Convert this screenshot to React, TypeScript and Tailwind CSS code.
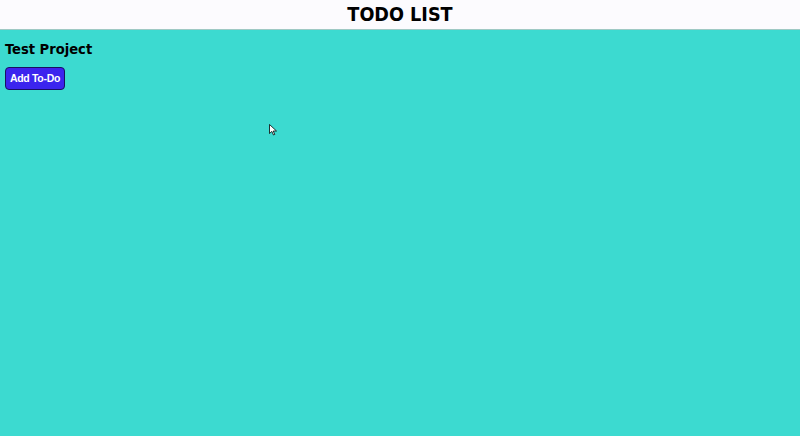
import React from "react";

export default function App() {
  return (
    <div className="relative min-h-[436px] w-full bg-[#3cdad0] font-['DejaVu_Sans_Condensed','DejaVu_Sans',sans-serif]">
      <header className="h-[30px] bg-[#fcfbfe] border-b border-[#9fc9c4] flex items-center justify-center">
        <h1 className="text-[19.6px] font-bold text-black leading-none">TODO LIST</h1>
      </header>
      <main className="px-[5px] pt-[10px]">
        <h2 className="text-[14.6px] font-bold text-black leading-[18px]">Test Project</h2>
        <button className="mt-[9px] h-[23px] w-[60px] rounded-[4px] border border-[#1a1060] bg-[#3b24ee] text-white text-[10.5px] tracking-[-0.3px] font-bold font-['Liberation_Sans',sans-serif]">
          Add To-Do
        </button>
      </main>
      <svg className="absolute left-[269px] top-[124px]" width="9" height="12" viewBox="0 0 9 12">
        <path d="M0.5 0.5 L0.5 9.5 L2.8 7.4 L4.5 11 L5.8 10.4 L4.2 7 L7.5 7 Z" fill="white" stroke="black" strokeWidth="0.8" />
      </svg>
    </div>
  );
}
